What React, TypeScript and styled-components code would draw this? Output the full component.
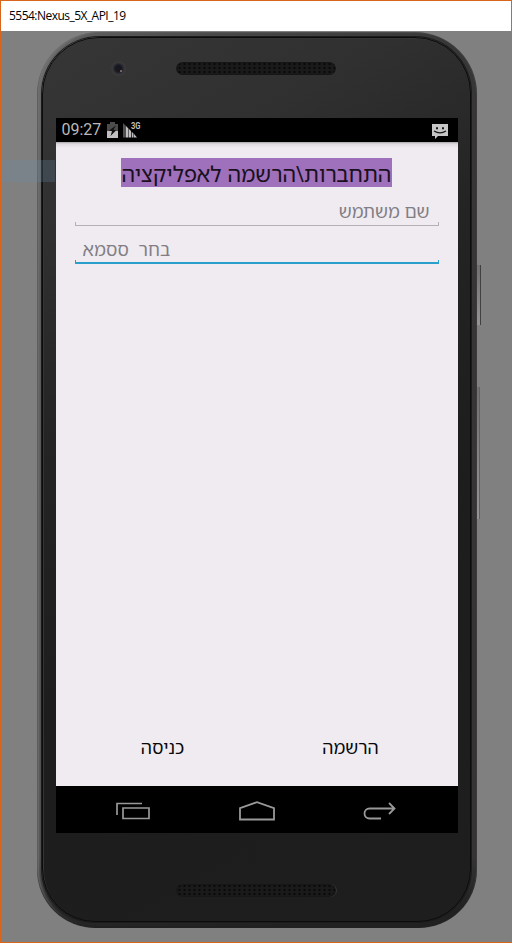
import React from "react";
import styled, { createGlobalStyle, css } from "styled-components";

const Global = createGlobalStyle`
  * { box-sizing: border-box; }
  body { margin: 0; background: #808080; }
`;

const EmulatorWindow = styled.div`
  position: relative;
  width: 512px;
  height: 943px;
  overflow: hidden;
  display: flex;
  flex-direction: column;
  border: 1px solid #d9641c;
  background: #808080;
`;

const TitleBar = styled.header`
  flex: 0 0 30px;
  padding-left: 8px;
  background: #fff;
  color: #000;
  font: 12px/30px "Open Sans", sans-serif;
  letter-spacing: -0.53px;
  white-space: nowrap;
`;

const Stage = styled.main`
  display: flex;
  padding: 1px 0 0 36px;
`;

const Phone = styled.div`
  flex: 0 0 440px;
  height: 896px;
  padding: 5px 6px 6px 5px;
  border-radius: 62px 62px 58px 58px;
  background:
    linear-gradient(transparent 92%, rgba(28, 28, 28, 0.75) 98%),
    linear-gradient(100deg, #6c6c6c 0%, #5c5c5c 8%, #484848 30%, #383637 70%, #353334 100%);
  box-shadow: inset 0 -2px 2px #202020, inset 2px 0 2px #777, inset -1px 0 1px #4a4849;
`;

const Face = styled.div`
  height: 885px;
  display: flex;
  flex-direction: column;
  align-items: center;
  border: 1px solid #0c0c0c;
  border-radius: 57px 56px 53px 53px;
  background: linear-gradient(150deg, #363636 0%, #303030 18%, #242424 36%, #1d1d1d 60%, #1e1e1e 100%);
  box-shadow: 0 0 0 1px #1b1b1b, inset 1px 1px 0 #353535;
`;

const Forehead = styled.div`
  flex: 0 0 80px;
  width: 100%;
  display: flex;
  align-items: flex-start;
  padding: 22px 0 0 67px;
`;

const Camera = styled.div`
  width: 17px;
  height: 17px;
  border-radius: 50%;
  background: radial-gradient(circle at 65% 65%, #80645f 0 0.7px, transparent 1.3px),
    radial-gradient(circle, #171720 0 3px, #2c2c34 5px, #393939 6px, #363636 8px);
`;

const Speaker = styled.div<{ $upper?: boolean }>`
  width: 160px;
  height: 13px;
  border-radius: 7px;
  background: radial-gradient(circle, #080808 0 0.6px, transparent 1.5px) 1px 0 / 5px 4px, #1a1a1a;
  box-shadow: inset 0 0 1px 1px #171717, 1px 0 0 #343434;
  ${(p) => p.$upper && css`margin-left: 49px; margin-top: 2px;`}
`;

const Screen = styled.section`
  flex: 0 0 715px;
  width: 402px;
  display: flex;
  flex-direction: column;
  background: #efebf1;
`;

const StatusBar = styled.div`
  flex: 0 0 24px;
  display: flex;
  align-items: center;
  padding: 0 10px 0 6px;
  background: #000;
  color: #b9b9b9;
  font: 16px/24px Roboto, sans-serif;
  svg { display: block; }
`;

const Clock = styled.span`
  width: 45px;
`;

const StatusIcons = styled.span`
  display: flex;
  gap: 5px;
`;

const MessageSlot = styled.span`
  margin-left: auto;
  padding-top: 2px;
`;

const Content = styled.form`
  flex: 1;
  display: flex;
  flex-direction: column;
  align-items: center;
  margin: 0;
  padding: 16px 19px 25px;
  background: linear-gradient(#aaa7ab 0, #dedae0 2px, #efebf1 6px);
  font-family: "Noto Sans Hebrew", "Open Sans", "Noto Sans", sans-serif;
`;

const Heading = styled.h1`
  width: 271px;
  height: 29px;
  margin: 0;
  background: #9f70bb;
  color: #191120;
  font-size: 21.7px;
  font-weight: 400;
  line-height: 31px;
  text-align: center;
  white-space: nowrap;
`;

const Field = styled.div<{ $active?: boolean }>`
  width: 364px;
  height: ${(p) => (p.$active ? 38 : 39)}px;
  display: flex;
  flex-direction: column;
  justify-content: flex-end;
  color: #827e84;
  font-size: ${(p) => (p.$active ? 18 : 17.8)}px;
  line-height: 24px;
  text-align: ${(p) => (p.$active ? "left" : "right")};
  white-space: pre;
`;

const Hint = styled.span`
  padding: 0 9px 0 8px;
  margin-bottom: -1px;
`;

const Underline = styled.div<{ $active?: boolean }>`
  height: 4px;
  border: solid ${(p) => (p.$active ? "#2b9fcc" : "#b4b0b6")};
  border-width: ${(p) => (p.$active ? "0 1px 2px" : "0 1px 1px")};
`;

const Actions = styled.div`
  width: 364px;
  margin-top: auto;
  display: grid;
  grid-template-columns: 176px 188px;
`;

const Action = styled.button<{ $end?: boolean }>`
  border: 0;
  background: none;
  color: #080808;
  font: 17.8px/28px "Noto Sans Hebrew", "Open Sans", "Noto Sans", sans-serif;
  padding: 0 0 0 ${(p) => (p.$end ? 12 : 0)}px;
`;

const NavBar = styled.nav`
  flex: 0 0 47px;
  display: grid;
  grid-template-columns: 60px 34px 89px 36px 88px 34px;
  align-items: center;
  padding-top: 2px;
  background: #000;
`;

const Chin = styled.div`
  padding: 51px 2px 0 0;
`;

const SelectionStrip = styled.div`
  position: absolute;
  left: 0;
  top: 159px;
  width: 54px;
  height: 22px;
  background: rgba(105, 140, 165, 0.25);
`;

const SideKey = styled.div<{ $top: number; $height: number; $wide?: boolean }>`
  position: absolute;
  left: 476px;
  top: ${(p) => p.$top}px;
  width: ${(p) => (p.$wide ? 4 : 3)}px;
  height: ${(p) => p.$height}px;
  background: linear-gradient(#707070, #959595);
  border-right: 1px solid ${(p) => (p.$wide ? "#413f40" : "#626262")};
`;

const BatteryIcon = () => (
  <svg width="11" height="16" viewBox="0 0 11 16">
    <path d="M3 0h5v2h3v14H0V2h3z" fill="#4c4c4c" />
    <path d="M0 9h11v7H0z" fill="#c0c0c0" />
    <path d="M9 3.5 2 8.5l3 .8L3.5 14 9 8.5 6.5 7.6z" fill="#111" />
  </svg>
);

const SignalIcon = () => (
  <svg width="18" height="16" viewBox="0 0 18 16">
    <path d="M0 1v14.5h3V4z" fill="#505050" />
    <path d="M3 4v11.5h2.5V6.5zM6 7v8.5h2V9zM8.7 9.7v5.8h1.8v-4zM11 12v3.5h3z" fill="#c0c0c0" />
    <text x="8" y="7.2" fontFamily="Roboto" fontSize="8.5" fontWeight="700" fill="#c0c0c0" textLength="9.5" lengthAdjust="spacingAndGlyphs">3G</text>
  </svg>
);

const MessageIcon = () => (
  <svg width="16" height="15" viewBox="0 0 16 15">
    <path d="M0 0h16v12H6l-3 3v-3H0z" fill="#c6c6c6" />
    <path d="M4 3.3h2v2H4zM10 3.3h2v2h-2z" fill="#151515" />
    <path d="M2 7q6 3.6 12 0" fill="none" stroke="#151515" strokeWidth="1.3" />
  </svg>
);

const RecentIcon = () => (
  <svg width="34" height="18" viewBox="0 0 34 18" fill="none" stroke="#999" strokeWidth="1.7">
    <path d="M1 13V1.5h25M7 6h26v10.5H7z" />
  </svg>
);

const HomeIcon = () => (
  <svg width="36" height="20" viewBox="0 0 36 20" fill="none" stroke="#999" strokeWidth="1.8">
    <path d="M1 18.5V7.2L18 1.2l17 6v11.3z" />
  </svg>
);

const BackIcon = () => (
  <svg width="34" height="18" viewBox="0 0 34 18" fill="none" stroke="#999" strokeWidth="1.8">
    <path d="M18 16.5H6.5a5 5 0 0 1 0-10H31M26 1l5.5 5.5L26 12" />
  </svg>
);

export default function App() {
  return (
    <>
      <Global />
      <EmulatorWindow>
        <TitleBar>5554:Nexus_5X_API_19</TitleBar>
        <Stage>
          <Phone>
            <Face>
              <Forehead>
                <Camera />
                <Speaker $upper />
              </Forehead>
              <Screen>
                <StatusBar>
                  <Clock>09:27</Clock>
                  <StatusIcons>
                    <BatteryIcon />
                    <SignalIcon />
                  </StatusIcons>
                  <MessageSlot><MessageIcon /></MessageSlot>
                </StatusBar>
                <Content>
                  <Heading dir="rtl">התחברות\הרשמה לאפליקציה</Heading>
                  <Field dir="rtl">
                    <Hint>שם משתמש</Hint>
                    <Underline />
                  </Field>
                  <Field dir="rtl" $active>
                    <Hint>בחר  ססמא</Hint>
                    <Underline $active />
                  </Field>
                  <Actions>
                    <Action type="button">כניסה</Action>
                    <Action type="button" $end>הרשמה</Action>
                  </Actions>
                </Content>
                <NavBar>
                  <span /><RecentIcon />
                  <span /><HomeIcon />
                  <span /><BackIcon />
                </NavBar>
              </Screen>
              <Chin><Speaker /></Chin>
            </Face>
          </Phone>
        </Stage>
        <SelectionStrip />
        <SideKey $top={264} $height={60} $wide />
        <SideKey $top={386} $height={132} />
      </EmulatorWindow>
    </>
  );
}
